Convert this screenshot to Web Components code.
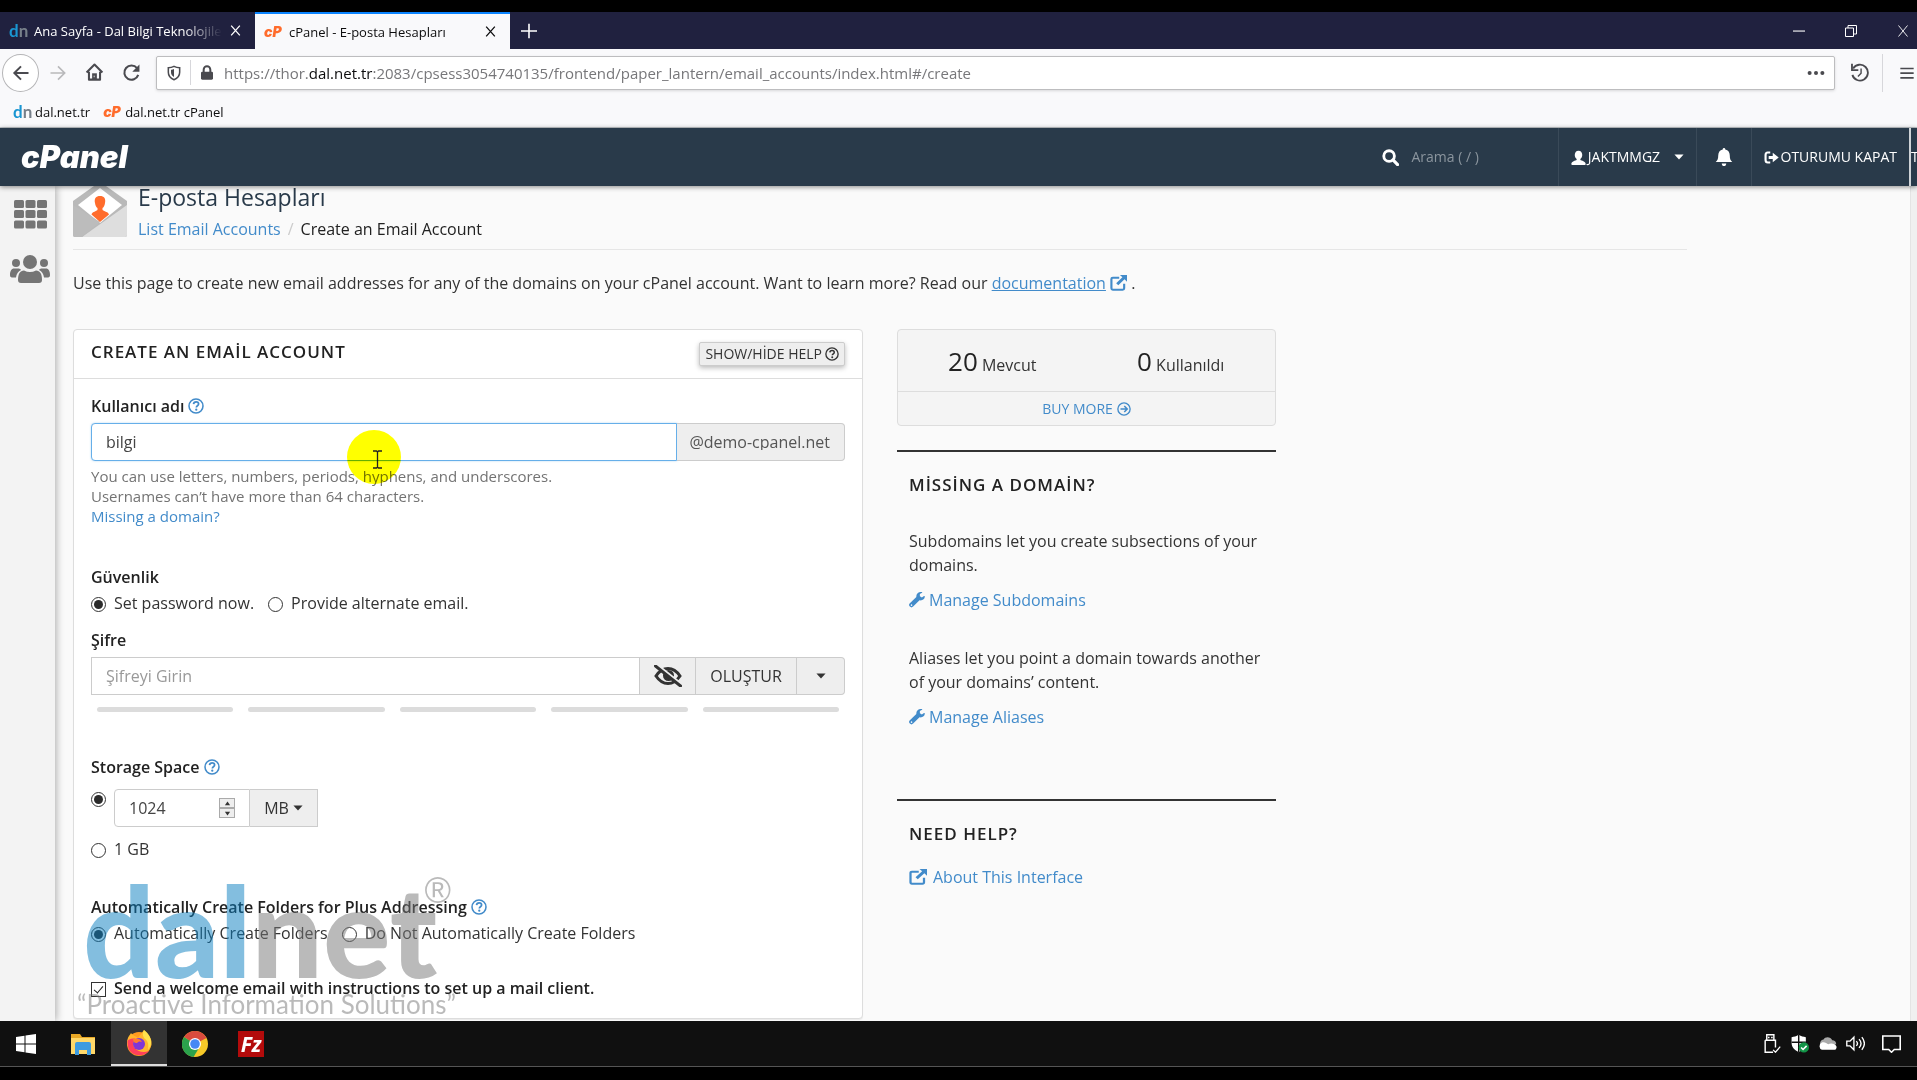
<!DOCTYPE html>
<html lang="tr">
<head>
<meta charset="utf-8">
<title>cPanel - E-posta Hesapları</title>
<style>
    html, body { margin: 0; height: 100%; }
    body {
        background: #000;
        color: #333;
        font: 16px/24px "Open Sans", "Noto Sans", sans-serif;
        overflow: hidden;
    }
</style>
</head>
<body>
<desktop-screen></desktop-screen>

<script>
const ICONS = {
    back: ['0 0 24 24', '<path d="M21 12H4M12 4l-8 8 8 8" fill="none" stroke="currentColor" stroke-width="2.4"/>'],
    forward: ['0 0 24 24', '<path d="M3 12h17M12 4l8 8-8 8" fill="none" stroke="currentColor" stroke-width="2"/>'],
    home: ['0 0 24 24', '<path d="M2 12 12 2l10 10M5 11v10h14V11" fill="none" stroke="currentColor" stroke-width="2.6" stroke-linejoin="round"/><path d="M9 21v-8h6v8z"/><path d="M11.600 16v2" stroke="#fff"/>'],
    reload: ['0 0 24 24', '<path d="M19 6.500A9 9 0 1 0 20.500 15" fill="none" stroke="currentColor" stroke-width="2.600"/><path d="M22 2v9h-9z"/>'],
    shield: ['0 0 24 24', '<path d="M12 2c3 1.500 5.500 2 8.500 2v7c0 5-3 9-8.500 11C6.500 20 3.500 16 3.500 11V4c3 0 5.500-.5 8.500-2z" fill="none" stroke="currentColor" stroke-width="2.300"/><path d="M12 6v12c-3-1.500-4.500-4-4.500-7V7c2 0 3-.3 4.500-1z"/>'],
    lock: ['0 0 24 24', '<rect x="3" y="10" width="18" height="12" rx="2"/><path d="M7 11V7a5 5 0 0 1 10 0v4" fill="none" stroke="currentColor" stroke-width="3"/>'],
    dots: ['0 0 24 24', '<circle cx="3.500" cy="12" r="2.700"/><circle cx="12" cy="12" r="2.700"/><circle cx="20.500" cy="12" r="2.700"/>'],
    history: ['0 0 24 24', '<path d="M4 7a10 10 0 1 1-1 8" fill="none" stroke="currentColor" stroke-width="2.300"/><path d="M2.500 1v8h8" fill="none" stroke="currentColor" stroke-width="2.300"/><path d="M14 7v6l-4 4" fill="none" stroke="currentColor" stroke-width="1.800"/>'],
    menu: ['0 0 24 24', '<path d="M2 4h20v2.500H2zM2 11h20v2.500H2zM2 18h20v2.500H2z"/>'],
    close: ['0 0 24 24', '<path d="M4 3l16 18M20 3 4 21" fill="none" stroke="currentColor" stroke-width="2.400"/>'],
    thinclose: ['0 0 24 24', '<path d="M3 1l18 22M21 1 3 23" fill="none" stroke="currentColor" stroke-width="1.800"/>'],
    plus: ['0 0 24 24', '<path d="M12 1v22M0 12h24" fill="none" stroke="currentColor" stroke-width="2.400"/>'],
    minimize: ['0 0 24 24', '<path d="M0 11h24v2.200H0z"/>'],
    restore: ['0 0 24 24', '<path d="M1 6h16v17H1zM6 6V1h17v17h-6" fill="none" stroke="currentColor" stroke-width="2"/>'],
    search: ['0 0 24 24', '<circle cx="10" cy="10" r="7.500" fill="none" stroke="currentColor" stroke-width="4"/><path d="M15.500 15.500 22 22" stroke="currentColor" stroke-width="4.500" stroke-linecap="round"/>'],
    user: ['0 0 24 24', '<path d="M12 1c-4 0-6 3-6 7 0 3 1.500 5 3 6.500v1.500c-2 1.500-8 1.500-8.500 6.500 0 1 .5 1.500 1.500 1.500h20c1 0 1.500-.5 1.500-1.500C23 17.500 17 17.500 15 16v-1.500C16.500 13 18 11 18 8c0-4-2-7-6-7z"/>'],
    bell: ['0 0 24 24', '<path d="M12 0c1 0 1.700.7 1.700 2 4 .8 6 4 6 8 0 5 1 6.500 3.300 8.500H1C3.300 16.500 4.300 15 4.300 10c0-4 2-7.200 6-8 0-1.300.7-2 1.700-2zM9 20.500h6c0 2-1.300 3.500-3 3.500s-3-1.500-3-3.500z"/>'],
    logout: ['0 0 24 24', '<path d="M10 4H6Q2.500 4 2.500 8v8q0 4 3.500 4h4" fill="none" stroke="currentColor" stroke-width="3.400"/><path d="M7.500 9.500H14V4.500L23.500 12 14 19.500v-5H7.500z"/>'],
    caret: ['0 0 24 24', '<path d="M1 6h22L12 18z"/>'],
    up: ['0 0 24 24', '<path d="M12 5 21 18H3z"/>'],
    down: ['0 0 24 24', '<path d="M12 19 21 6H3z"/>'],
    grid: ['0 0 33 29', '<rect width="10" height="8" rx="1.500"/><rect x="11.500" width="10" height="8" rx="1.500"/><rect x="23" width="10" height="8" rx="1.500"/><rect y="10" width="10" height="8" rx="1.500"/><rect x="11.500" y="10" width="10" height="8" rx="1.500"/><rect x="23" y="10" width="10" height="8" rx="1.500"/><rect y="20.500" width="10" height="8" rx="1.500"/><rect x="11.500" y="20.500" width="10" height="8" rx="1.500"/><rect x="23" y="20.500" width="10" height="8" rx="1.500"/>'],
    users: ['0 0 40 28', '<circle cx="20" cy="7" r="7"/><circle cx="6" cy="8" r="4"/><circle cx="34" cy="8" r="4"/><path d="M8 25c0-6 2-9.500 6-9.500 4 2 8 2 12 0 4 0 6 3.500 6 9.500 0 2-1 3-3 3H11c-2 0-3-1-3-3zM0 20c0-4 1.500-6.500 4-6.500h4c1.500 0 2.500.5 3 1.500-3 1.500-4.500 4-5 7.500H2c-1.500 0-2-1-2-2.500zM40 20c0-4-1.500-6.500-4-6.500h-4c-1.500 0-2.500.5-3 1.500 3 1.500 4.500 4 5 7.500h4c1.500 0 2-1 2-2.500z"/>'],
    help: ['0 0 24 24', '<circle cx="12" cy="12" r="10.500" fill="none" stroke="currentColor" stroke-width="2.300"/><path d="M8.300 9.300c.2-2.300 1.700-3.500 3.900-3.500 2.100 0 3.700 1.200 3.700 3.100 0 2.700-3.400 2.800-3.400 5.300" fill="none" stroke="currentColor" stroke-width="2.600"/><circle cx="12.400" cy="17.500" r="1.700"/>'],
    arrowcircle: ['0 0 24 24', '<circle cx="12" cy="12" r="10.500" fill="none" stroke="currentColor" stroke-width="2.300"/><path d="M6 12h11M12.500 7l5 5-5 5" fill="none" stroke="currentColor" stroke-width="2.600"/>'],
    external: ['0 0 24 24', '<path d="M13 4H4Q2 4 2 6v14q0 2 2 2h14q2 0 2-2v-7" fill="none" stroke="currentColor" stroke-width="3"/><path d="M14 0h10v10l-3.500-3.500-8.800 8.800-3-3 8.800-8.800z"/>'],
    wrench: ['0 0 24 24', '<path d="M23.600 6.500c-.2-.7-.7-.8-1.100-.4l-3.200 2-3-1.600V3.100L19.600 1c.4-.4.300-.8-.2-.9-4.700-1.100-9 2.600-8.400 7.500L1.300 17a3.300 3.300 0 1 0 4.900 4.900l9.600-9.400c4.500.8 8.300-2 7.800-6zM3.800 20.900a1.200 1.200 0 1 1 0-2.400 1.200 1.200 0 0 1 0 2.400z"/>'],
    eyeoff: ['0 0 28 22', '<path d="M2 11q5-7.500 12-7.500T26 11q-5 7.500-12 7.500T2 11z" fill="none" stroke="currentColor" stroke-width="3"/><circle cx="14.500" cy="10.500" r="5.500"/><path d="M3 0l25 20" stroke="#eee" stroke-width="3"/><path d="M1.500 1l25 20" stroke="currentColor" stroke-width="3" stroke-linecap="round"/>'],
    mail: ['0 0 54 51', '<path d="M0 15 21 0h12l21 15v34q0 2-2 2H2q-2 0-2-2z" fill="#b9b9b9"/><path d="M5 19 27 2l22 17-22 18z" fill="#fff"/><path d="M54 19v30q0 2-2 2H9z" fill="#dedede"/><path d="M0 19v30q0 2 2 2h7l18-15z" fill="#bcbcbc"/><path d="M27 10c-4 0-6 2.500-5 7 .4 2.500 1 4 2.500 5v2c-2 1.500-5.500 2-6 4.500L27 36l9-7.500c-.5-2.500-4.500-3-6.500-4.500v-2c1.500-1 2.100-2.500 2.500-5 1-4.500-1-7-5-7z" fill="#ff6c2c"/>'],
    windows: ['0 0 20 20', '<path d="M0 3l8.500-1.300v7.800H0zM9.500 1.500 20 0v9.500H9.500zM0 10.500h8.500v7.800L0 17zM9.500 10.500H20V20l-10.500-1.500z" fill="#fff"/>'],
    folder: ['0 0 24 22', '<path d="M0 1h9l2 3h13v17H0z" fill="#e9a825"/><path d="M0 5h24v16H0z" fill="#ffd869"/><path d="M4 11q0-2 2-2h12q2 0 2 2v11h-4v-5H8v5H4z" fill="#3d9be0"/>'],
    firefox: ['0 0 26 26', '<circle cx="13" cy="14" r="12" fill="#ff9a1f"/><path d="M1 12C2 6 4 5 5 3c2 3 5 3 7 5l6-8c7 7 8 10 7.500 15A12.500 12 0 0 1 1 14z" fill="#ffb52e"/><path d="M1.500 11Q1 19 6 23c5 3.500 13 3 17-2-5 2-12 1-15-4-2-4 0-7 2-8-4-1-7 0-8.500 2z" fill="#ff3f5c"/><circle cx="13" cy="14" r="6" fill="#8036d6"/><path d="M7 9c4-1 8 0 9 3-2-1-4-.5-5 1-2 .5-4-1-4-4z" fill="#ff7b2d"/><path d="M18 0c8 6 9 14 4 20 1-6 0-9-4-12-2-3-1-6 0-8z" fill="#ffe14d"/>'],
    chrome: ['0 0 26 26', '<circle cx="13" cy="13" r="13" fill="#f7c928"/><path d="M13 13 2 6a13 13 0 0 1 22.500 1z" fill="#d94b3d"/><path d="M13 13 2 6a13 13 0 0 0 9.500 20l5.500-9z" fill="#2ba24c"/><circle cx="13" cy="13" r="6" fill="#fff"/><circle cx="13" cy="13" r="4.800" fill="#4688f4"/>'],
    usb: ['0 0 24 24', '<path d="M4 8h13v9M4 8v15h10M6 8V1h9v7" fill="none" stroke="#fff" stroke-width="1.800"/><path d="M7.500 3.500h2v2h-2zM11.500 3.500h2v2h-2z" fill="#fff"/><path d="m14 20 3 3 6-7" fill="none" stroke="#fff" stroke-width="1.600"/>'],
    defender: ['0 0 24 24', '<path d="M11 1c3 2 6 2.500 9 3v7c0 6-4 9-9 12-5-3-9-6-9-12V4c3-.5 6-1 9-3z" fill="#fff"/><path d="M11 1v22M2 10.500h18" stroke="#101010" stroke-width="1.800"/><circle cx="17.500" cy="17" r="6.500" fill="#129447"/><path d="m14 17 2.500 2.500 4.500-4.500" fill="none" stroke="#fff" stroke-width="2"/>'],
    cloud: ['0 0 24 24', '<path d="M3 14a5 5 0 0 1 4-7c2-4 9-4 11 1 3 0 5 2 5 5l-8 2z" fill="#aaa"/><path d="M5 20a5 5 0 0 1-.5-9C8 9.500 11 12 13 13c3-2 9-1 10.500 3 0 2-1 4-3 4z" fill="#fff"/>'],
    sound: ['0 0 24 24', '<path d="M1 9h4l5-5v16l-5-5H1zM13 9q3 3 0 6M16.500 6.500q5 5.500 0 11M20 4q6.500 8 0 16" fill="none" stroke="#fff" stroke-width="1.700"/>'],
    message: ['0 0 24 24', '<path d="M1 2.500h22v17h-7.500L12 23l-3.500-3.500H1z" fill="none" stroke="#fff" stroke-width="2"/>']
};

function define(name, html, setup) {
    customElements.define(name, class extends HTMLElement {
        constructor() {
            super();
            this.attachShadow({ mode: 'open' });
        }

        connectedCallback() {
            this.shadowRoot.innerHTML = html;
            if (setup) {
                setup(this, this.shadowRoot);
            }
        }
    });
}

// <ui-icon name="..." w="16" h="16">
define('ui-icon', `
    <style>
        :host { display: inline-flex; flex: none; vertical-align: -2px; }
        svg { display: block; }
    </style>
`, (host, root) => {
    const [box, shapes] = ICONS[host.getAttribute('name')];
    const w = host.getAttribute('w') || 16;
    const h = host.getAttribute('h') || w;
    root.innerHTML += `<svg width="${w}" height="${h}" viewBox="${box}" preserveAspectRatio="none" fill="currentColor" aria-hidden="true">${shapes}</svg>`;
});

define('site-mark', `
    <style>
        :host { display: inline-block; flex: none; width: 18px; font: 700 17px/18px "Lato", sans-serif; color: #1a96d2; }
        :host([kind="cp"]) { font: italic 900 14px/18px "Inter", sans-serif; color: #ff6c2c; }
        i { font-style: normal; color: #77808a; }
    </style>
    <span></span>
`, (host, root) => {
    root.querySelector('span').innerHTML = host.getAttribute('kind') === 'cp' ? 'cP' : 'd<i>n</i>';
});

define('browser-tab', `
    <style>
        :host { display: flex; align-items: center; gap: 7px; width: 255px; height: 37px; padding: 0 13px 0 9px; box-sizing: border-box; color: #fff; font-size: 13px; line-height: 20px; }
        :host([active]) { background: #f9f9fb; color: #0c0c0d; border-top: 2px solid #0a84ff; }
        span { flex: 1; white-space: nowrap; overflow: hidden; }
        :host([fade]) span { mask-image: linear-gradient(90deg, #000 80%, transparent); }
        button { border: 0; padding: 0; background: none; color: inherit; display: flex; }
    </style>
    <slot name="mark"></slot><span><slot></slot></span>
    <button aria-label="Sekmeyi kapat"><ui-icon name="close" w="13" h="13"></ui-icon></button>
`);

define('tab-strip', `
    <style>
        :host { display: flex; align-items: center; height: 37px; background: #20213f; color: #fff; }
        button { border: 0; padding: 0; background: none; color: inherit; display: flex; }
        .new { margin-left: 11px; }
        .win { margin-left: auto; display: flex; align-items: center; gap: 40px; padding-right: 8px; }
    </style>
    <browser-tab fade><site-mark slot="mark" kind="dn"></site-mark>Ana Sayfa - Dal Bilgi Teknolojileri</browser-tab>
    <browser-tab active><site-mark slot="mark" kind="cp"></site-mark>cPanel - E-posta Hesapları</browser-tab>
    <button class="new" aria-label="Yeni sekme"><ui-icon name="plus" w="16"></ui-icon></button>
    <div class="win">
        <button aria-label="Küçült"><ui-icon name="minimize" w="12"></ui-icon></button>
        <button aria-label="Geri yükle"><ui-icon name="restore" w="12"></ui-icon></button>
        <button aria-label="Kapat"><ui-icon name="thinclose" w="12"></ui-icon></button>
    </div>
`);

define('nav-bar', `
    <style>
        :host { display: flex; align-items: center; height: 47px; padding: 0 2px; background: #f9f9fb; color: #4a4a4f; box-sizing: border-box; }
        button { border: 0; padding: 0; background: none; color: inherit; display: flex; align-items: center; justify-content: center; width: 37px; height: 38px; }
        .back { border: 1px solid #b5b5b7; border-radius: 50%; background: #fff; box-sizing: border-box; }
        .fwd { color: #b9b9bb; }
        .url { display: flex; align-items: center; flex: 1; height: 34px; box-sizing: border-box; margin: 0 6px; padding: 0 9px; border: 1px solid #bdbdbf; border-radius: 2px; background: #fff; font-size: 15px; box-shadow: 0 1px 3px #0002; }
        .sep { width: 1px; height: 25px; background: #d7d7db; margin: 0 8px; }
        .text { flex: 1; margin-left: 9px; color: #77777a; white-space: nowrap; overflow: hidden; }
        b { font-weight: 400; color: #0c0c0d; }
        .line { width: 1px; height: 38px; background: #d7d7db; margin-left: 4px; }
        .menu { width: 32px; justify-content: flex-end; }
    </style>
    <button class="back" aria-label="Geri"><ui-icon name="back" w="20"></ui-icon></button>
    <button class="fwd" aria-label="İleri"><ui-icon name="forward" w="20"></ui-icon></button>
    <button aria-label="Giriş"><ui-icon name="home" w="19"></ui-icon></button>
    <button aria-label="Yenile"><ui-icon name="reload" w="19"></ui-icon></button>
    <div class="url">
        <ui-icon name="shield" w="16"></ui-icon><span class="sep"></span><ui-icon name="lock" w="16"></ui-icon>
        <div class="text" role="textbox" aria-label="Adres">https://thor.<b>dal.net.tr</b>:2083/cpsess3054740135/frontend/paper_lantern/email_accounts/index.html#/create</div>
        <ui-icon name="dots" w="18"></ui-icon>
    </div>
    <button aria-label="Geçmiş"><ui-icon name="history" w="19"></ui-icon></button>
    <span class="line"></span>
    <button class="menu" aria-label="Menü"><ui-icon name="menu" w="16"></ui-icon></button>
`);

define('bookmark-bar', `
    <style>
        :host { display: flex; gap: 13px; height: 32px; align-items: center; padding: 0 13px; background: #f9f9fb; font-size: 13px; line-height: 20px; box-sizing: border-box; border-bottom: 1px solid #c4c8cc; }
        a { display: flex; align-items: center; gap: 4px; color: #0c0c0d; text-decoration: none; }
    </style>
    <a href="#"><site-mark kind="dn"></site-mark>dal.net.tr</a>
    <a href="#"><site-mark kind="cp"></site-mark>dal.net.tr cPanel</a>
`);

define('cp-header', `
    <style>
        :host { display: flex; height: 58px; background: #293a4a; color: #fff; font-size: 14px; box-shadow: 0 1px 5px #0007; z-index: 2; position: relative; }
        .logo { margin: 0 auto 0 21px; align-self: center; color: #fff; text-decoration: none; font: italic 900 31px/32px "Inter", sans-serif; }
        .search { display: flex; align-items: center; gap: 12px; width: 176px; }
        input { flex: 1; min-width: 0; border: 0; padding: 0; background: none; outline: 0; color: #fff; font: inherit; }
        input::placeholder { color: #8b959e; opacity: 1; }
        a.item { display: flex; align-items: center; border-left: 1px solid #3a4a59; color: #fff; text-decoration: none; white-space: nowrap; padding: 0 12px; }
        .item .gap { margin-left: 14px; }
        .edge { width: 8px; overflow: hidden; border-left: 2px solid #cfd3d7; line-height: 58px; box-sizing: border-box; }
    </style>
    <a class="logo" href="#">cPanel</a>
    <label class="search"><ui-icon name="search" w="17"></ui-icon><input type="text" aria-label="Arama" placeholder="Arama ( / )"></label>
    <a class="item" href="#"><ui-icon name="user" w="15"></ui-icon>&hairsp;JAKTMMGZ<ui-icon class="gap" name="caret" w="10"></ui-icon></a>
    <a class="item" href="#" style="padding: 0 18px" aria-label="Bildirimler"><ui-icon name="bell" w="18"></ui-icon></a>
    <a class="item" href="#"><ui-icon name="logout" w="15"></ui-icon>&hairsp;OTURUMU KAPAT</a>
    <div class="edge">T</div>
`);

define('side-nav', `
    <style>
        :host { display: flex; flex-direction: column; align-items: center; gap: 26px; width: 55px; flex: none; padding-top: 14px; box-sizing: border-box; background: #f3f3f3; color: #757575; box-shadow: 1px 0 8px #0005; }
        a { display: flex; color: inherit; margin-left: 5px; }
    </style>
    <a href="#" aria-label="Araçlar"><ui-icon name="grid" w="33" h="29"></ui-icon></a>
    <a href="#" aria-label="Kullanıcılar"><ui-icon name="users" w="40" h="28"></ui-icon></a>
`);

define('page-heading', `
    <style>
        :host { display: flex; gap: 11px; padding-bottom: 9px; border-bottom: 1px solid #e6e6e6; }
        h1 { margin: 0 0 9px; font-size: 23px; line-height: 22px; font-weight: 400; color: #293a4a; }
        nav { display: flex; gap: 7px; line-height: 24px; color: #222; }
        i { font-style: normal; color: #ccc; }
        a { color: #428bca; text-decoration: none; }
        div { height: 54px; }
    </style>
    <ui-icon name="mail" w="54" h="51"></ui-icon>
    <div>
        <h1>E-posta Hesapları</h1>
        <nav><a href="#">List Email Accounts</a><i>/</i><span>Create an Email Account</span></nav>
    </div>
`);

// radio or tick box together with its label text
define('choice-option', `
    <style>
        :host { display: block; }
        label { display: flex; gap: 8px; align-items: center; }
        input { appearance: none; flex: none; margin: 3px 0 0; width: 15px; height: 15px; border: 1px solid #333; background: #fff; display: grid; place-items: center; }
        input[type=radio] { border-radius: 50%; }
        input[type=radio]:checked::before { content: ""; width: 9px; height: 9px; border-radius: 50%; background: #2b2b2b; }
        input[type=checkbox]:checked::before { content: ""; width: 4px; height: 8px; margin-top: -3px; border: solid #222; border-width: 0 1px 1px 0; transform: rotate(40deg); }
    </style>
    <label><input><span><slot></slot></span></label>
`, (host, root) => {
    const input = root.querySelector('input');
    input.type = host.getAttribute('type') || 'radio';
    input.checked = host.hasAttribute('checked');
    if (host.hasAttribute('label')) {
        input.setAttribute('aria-label', host.getAttribute('label'));
    }
});

define('account-form', `
    <style>
        :host { display: block; background: #fff; border: 1px solid #ddd; border-radius: 4px; box-shadow: 0 1px 1px #0001; }
        header { display: flex; justify-content: space-between; padding: 12px 17px; border-bottom: 1px solid #ddd; }
        h2 { margin: 0; font-size: 17px; line-height: 20px; font-weight: 600; letter-spacing: 1px; color: #222; }
        button { font: inherit; color: #333; background: #eee; border: 1px solid #ccc; padding: 0; display: flex; align-items: center; justify-content: center; }
        .toggle { height: 24px; padding: 0 5px; gap: 3px; border-radius: 2px; font-size: 14px; box-shadow: 0 2px 5px #0004; }
        form { padding: 15px 17px 18px; }
        .name { display: flex; align-items: center; gap: 4px; font-weight: 600; color: #222; }
        .name ui-icon { color: #428bca; }
        .group { display: flex; height: 38px; margin-top: 5px; }
        input { font: inherit; color: #444; background: #fff; border: 1px solid #ccc; padding: 0 14px; min-width: 0; box-sizing: border-box; outline: 0; }
        .group > input { flex: 1; }
        input::placeholder { color: #999; opacity: 1; }
        #user { border-color: #66afe9; border-radius: 4px 0 0 4px; box-shadow: 0 0 2px #66afe988; }
        .addon { display: flex; align-items: center; padding: 0 14px 0 12px; background: #eee; border: 1px solid #ccc; border-left: 0; border-radius: 0 4px 4px 0; color: #555; }
        .addon span { line-height: 16px; height: 16px; overflow: hidden; }
        .hint { margin: 5px 0 39px; font-size: 15px; line-height: 20px; color: #737373; }
        .hint a { color: #428bca; text-decoration: none; }
        .row { display: flex; gap: 14px; margin-top: 2px; }
        .group button { border-left: 0; }
        .meter { display: grid; grid-template-columns: repeat(5, 1fr); gap: 15px; margin: 12px 6px 43px; }
        .meter i { height: 5px; border-radius: 3px; background: #dcdcdc; }
        .quota { display: flex; gap: 8px; margin: 10px 0; }
        .quota choice-option { width: 15px; }
        .number { display: flex; align-items: center; width: 136px; height: 38px; box-sizing: border-box; border: 1px solid #ccc; border-radius: 4px 0 0 4px; padding-right: 14px; }
        .number input { flex: 1; border: 0; background: none; padding-right: 0; appearance: textfield; }
        .number input::-webkit-inner-spin-button { appearance: none; }
        .spin button { width: 16px; height: 10px; border-color: #aaa; }
        .quota .unit { width: 68px; height: 38px; gap: 4px; border-left: 0; }
        .box { display: flex; }
        .auto { margin-top: 34px; }
        .welcome { margin-top: 31px; font-weight: 600; color: #222; }
    </style>
    <header>
        <h2>CREATE AN EMAİL ACCOUNT</h2>
        <button class="toggle">SHOW/HİDE HELP <ui-icon name="help" w="14"></ui-icon></button>
    </header>
    <form>
        <div class="name"><label for="user">Kullanıcı adı</label><ui-icon name="help" w="16"></ui-icon></div>
        <div class="group"><input id="user" type="text" value="bilgi"><div class="addon"><span>@demo-cpanel.net</span></div></div>
        <div class="hint">You can use letters, numbers, periods, hyphens, and underscores.<br>Usernames can’t have more than 64 characters.<br><a href="#">Missing a domain?</a></div>

        <div class="name">Güvenlik</div>
        <div class="row"><choice-option checked>Set password now.</choice-option><choice-option>Provide alternate email.</choice-option></div>
        <div class="name" style="margin-top: 13px"><label for="pass">Şifre</label></div>
        <div class="group">
            <input id="pass" type="text" placeholder="Şifreyi Girin">
            <button type="button" style="width: 56px" aria-label="Şifreyi göster"><ui-icon name="eyeoff" w="28" h="22"></ui-icon></button>
            <button type="button" style="width: 101px">OLUŞTUR</button>
            <button type="button" style="width: 48px; border-radius: 0 4px 4px 0" aria-label="Seçenekler"><ui-icon name="caret" w="10"></ui-icon></button>
        </div>
        <div class="meter"><i></i><i></i><i></i><i></i><i></i></div>

        <div class="name"><label for="quota">Storage Space</label><ui-icon name="help" w="16"></ui-icon></div>
        <div class="quota">
            <choice-option checked label="Storage Space"></choice-option>
            <div class="box">
                <div class="number">
                    <input id="quota" type="number" value="1024">
                    <div class="spin">
                        <button type="button" style="border: 1px solid #aaa" aria-label="Artır"><ui-icon name="up" w="7"></ui-icon></button>
                        <button type="button" style="border: 1px solid #aaa" aria-label="Azalt"><ui-icon name="down" w="7"></ui-icon></button>
                    </div>
                </div>
                <button type="button" class="unit">MB <ui-icon name="caret" w="10"></ui-icon></button>
            </div>
        </div>
        <choice-option>1 GB</choice-option>

        <div class="name auto">Automatically Create Folders for Plus Addressing<ui-icon name="help" w="16"></ui-icon></div>
        <div class="row"><choice-option checked>Automatically Create Folders</choice-option><choice-option>Do Not Automatically Create Folders</choice-option></div>
        <choice-option class="welcome" type="checkbox" checked>Send a welcome email with instructions to set up a mail client.</choice-option>
    </form>
`);

define('account-stats', `
    <style>
        :host { display: block; background: #f4f4f4; border: 1px solid #ddd; border-radius: 4px; margin-bottom: 24px; }
        .counts { display: grid; grid-template-columns: 1fr 1fr; text-align: center; height: 61px; line-height: 62px; border-bottom: 1px solid #ddd; }
        b { font-weight: 400; font-size: 26px; color: #222; }
        a { display: flex; align-items: center; justify-content: center; gap: 4px; height: 33px; font-size: 14px; color: #428bca; text-decoration: none; }
    </style>
    <div class="counts"><div><b>20</b> Mevcut</div><div><b>0</b> Kullanıldı</div></div>
    <a href="#">BUY MORE <ui-icon name="arrowcircle" w="14"></ui-icon></a>
`);

define('side-panel', `
    <style>
        :host { display: block; border-top: 2px solid #333; padding: 23px 12px 0; margin-bottom: 70px; }
        h3 { margin: 0; font-size: 17px; line-height: 20px; font-weight: 600; letter-spacing: 1px; color: #222; }
    </style>
    <h3></h3><slot></slot>
`, (host, root) => {
    root.querySelector('h3').textContent = host.getAttribute('heading');
});

define('side-link', `
    <style>
        :host { display: block; }
        a { display: flex; align-items: center; gap: 4px; color: #428bca; text-decoration: none; }
        :host([external]) a { gap: 6px; }
    </style>
    <a href="#"><ui-icon name="wrench" w="16"></ui-icon><slot></slot></a>
`, (host, root) => {
    if (host.hasAttribute('external')) {
        root.querySelector('a').innerHTML = '<ui-icon name="external" w="18" h="16"></ui-icon><slot></slot>';
    }
});

define('task-bar', `
    <style>
        :host { display: flex; justify-content: space-between; height: 46px; background: #101010; border-bottom: 1px solid #555; box-sizing: border-box; }
        nav { display: flex; }
        button { border: 0; padding: 0; background: none; display: flex; align-items: center; justify-content: center; width: 56px; }
        .start { margin-right: 4px; width: 51px; }
        .on { background: #333; border-bottom: 2px solid #ddd; }
        .fz { width: 26px; height: 26px; background: #b30b0b; color: #fff; font: italic 700 21px/26px "Open Sans", sans-serif; }
        .tray { align-items: center; gap: 9px; padding-right: 16px; }
        .tray ui-icon:last-child { margin-left: 8px; }
    </style>
    <nav>
        <button class="start" aria-label="Başlat"><ui-icon name="windows" w="20"></ui-icon></button>
        <button aria-label="Dosya Gezgini"><ui-icon name="folder" w="24" h="22"></ui-icon></button>
        <button class="on" aria-label="Firefox"><ui-icon name="firefox" w="26"></ui-icon></button>
        <button aria-label="Chrome"><ui-icon name="chrome" w="26"></ui-icon></button>
        <button aria-label="FileZilla"><span class="fz">Fz</span></button>
    </nav>
    <nav class="tray">
        <ui-icon name="usb" w="19"></ui-icon><ui-icon name="defender" w="19"></ui-icon><ui-icon name="cloud" w="19"></ui-icon><ui-icon name="sound" w="19"></ui-icon><ui-icon name="message" w="19"></ui-icon>
    </nav>
`);

// floats over the page like the recorder's logo
define('water-mark', `
    <style>
        :host { position: absolute; left: 77px; bottom: 0; display: block; opacity: .5; pointer-events: none; white-space: nowrap; font-family: "Lato", sans-serif; color: #777; }
        .logo { display: flex; margin: 0 0 8px 6px; font-size: 126px; line-height: 98px; font-weight: 900; color: #0a7fc0; }
        .logo b { color: #777; font-weight: 900; }
        sup { position: absolute; top: -8px; right: 5px; font: 400 36px/36px "Liberation Sans", sans-serif; color: #777; }
        .tag { font-size: 26px; line-height: 34px; }
    </style>
    <div class="logo">dal<b>net</b></div><sup>®</sup>
    <div class="tag">“Proactive Information Solutions”</div>
`);

define('mouse-pointer', `
    <style>
        :host { position: absolute; left: 347px; top: 244px; width: 54px; height: 54px; mix-blend-mode: multiply; border-radius: 50%; background: #ff0; pointer-events: none; }
        svg { position: absolute; left: 26px; top: 20px; }
    </style>
    <svg width="9" height="19" viewBox="0 0 9 19"><path d="M0 1h3.500l1 1 1-1H9M0 18h3.500l1-1 1 1H9M4.500 2v15" fill="none" stroke="#222" stroke-width="1.300"/></svg>
`);

define('cp-page', `
    <style>
        :host { display: flex; flex: 1; min-height: 0; overflow: hidden; position: relative; background: #fafafa; }
        main { flex: 1; padding: 0 18px; max-width: 1614px; }
        p { margin: 21px 0 34px; }
        p a { color: #428bca; }
        p ui-icon { color: #428bca; }
        .cols { display: grid; grid-template-columns: minmax(0, 790px) minmax(0, 379px); gap: 34px; align-items: start; }
        .about { margin: 34px 0 11px; }
        .bar { width: 6px; flex: none; margin-left: auto; background: #f0f0f0; border-left: 1px solid #e4e4e4; }
        .faq { margin-top: 21px; }
    </style>
    <side-nav></side-nav>
    <main>
        <page-heading></page-heading>
        <p>Use this page to create new email addresses for any of the domains on your cPanel account. Want to learn more? Read our <a href="#">documentation</a> <ui-icon name="external" w="17" h="16"></ui-icon> .</p>
        <div class="cols">
            <account-form></account-form>
            <aside>
                <account-stats></account-stats>
                <side-panel heading="MİSSİNG A DOMAİN?">
                    <div class="about">Subdomains let you create subsections of your domains.</div>
                    <side-link>Manage Subdomains</side-link>
                    <div class="about">Aliases let you point a domain towards another of your domains’ content.</div>
                    <side-link>Manage Aliases</side-link>
                </side-panel>
                <side-panel heading="NEED HELP?">
                    <side-link class="faq" external>About This Interface</side-link>
                </side-panel>
            </aside>
        </div>
    </main>
    <div class="bar"></div>
    <mouse-pointer></mouse-pointer>
    <water-mark></water-mark>
`);

define('desktop-screen', `
    <style>
        :host { display: flex; flex-direction: column; height: 100vh; box-sizing: border-box; padding: 12px 0 13px; }
    </style>
    <tab-strip></tab-strip>
    <nav-bar></nav-bar>
    <bookmark-bar></bookmark-bar>
    <cp-header></cp-header>
    <cp-page></cp-page>
    <task-bar></task-bar>
`);
</script>
</body>
</html>
